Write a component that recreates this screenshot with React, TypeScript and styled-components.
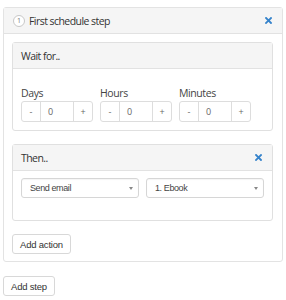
import styled, { createGlobalStyle } from 'styled-components';

const GlobalStyle = createGlobalStyle`
	body {
		margin: 0;
		background: #fff;
		font-family: 'Open Sans', sans-serif;
		color: #333;
	}
`;

const Page = styled.div`
	display: flex;
	flex-direction: column;
	align-items: flex-start;
	padding: 7px 0 0 3px;
	width: 280px;
`;

const Panel = styled.div<{ $outer?: boolean }>`
	align-self: stretch;
	border: 1px solid ${(props) => (props.$outer ? '#e3e3e3' : '#e0e0e0')};
	border-radius: 3px;
	background: #fff;
`;

const PanelHeader = styled.div`
	display: flex;
	align-items: center;
	height: 25px;
	padding: 0 10px 0 8px;
	background: #f5f5f5;
	border-bottom: 1px solid #e2e2e2;
	font-size: 10.5px;
	letter-spacing: -0.55px;
	color: #333;
`;

const Title = styled.span`
	flex: 1;
`;

const Badge = styled.span`
	display: inline-flex;
	align-items: center;
	justify-content: center;
	width: 10px;
	height: 10px;
	margin: 0 4px 0 1px;
	border: 1px solid #c8c8c8;
	border-radius: 50%;
	font-size: 7px;
	letter-spacing: 0;
	color: #777;
	background: #fff;
`;

const OuterBody = styled.div`
	display: flex;
	flex-direction: column;
	align-items: flex-start;
	gap: 13px;
	padding: 8px 9px 7px 8px;
`;

const WaitBody = styled.div`
	display: flex;
	gap: 7px;
	padding: 16px 8px 8px;
`;

const ThenBody = styled.div`
	display: flex;
	gap: 7px;
	padding: 7px 7px 22px 8px;
`;

const Field = styled.div`
	display: flex;
	flex-direction: column;
	width: 72px;
`;

const Label = styled.label`
	font-size: 10.5px;
	letter-spacing: -0.4px;
	line-height: 16px;
	color: #444;
`;

const Stepper = styled.div`
	display: flex;
	height: 21px;
	border: 1px solid #ddd;
	border-radius: 3px;
	box-sizing: border-box;
`;

const StepBtn = styled.span`
	display: flex;
	align-items: center;
	justify-content: center;
	width: 18px;
	font-size: 9px;
	color: #666;
`;

const StepValue = styled.span`
	flex: 1;
	display: flex;
	align-items: center;
	padding-left: 7px;
	border-left: 1px solid #ddd;
	border-right: 1px solid #ddd;
	font-size: 9px;
	color: #666;
`;

const Select = styled.div`
	display: flex;
	align-items: center;
	width: 118px;
	height: 20px;
	box-sizing: border-box;
	padding: 0 5px 0 8px;
	border: 1px solid #d6d6d6;
	border-radius: 3px;
	font-family: 'Liberation Sans', Arial, sans-serif;
	font-size: 9px;
	letter-spacing: -0.4px;
	color: #444;
	box-shadow: inset 0 1px 1px rgba(0, 0, 0, 0.04);
`;

const SelectText = styled.span`
	flex: 1;
`;

const Caret = styled.span`
	width: 0;
	height: 0;
	border-left: 2px solid transparent;
	border-right: 2px solid transparent;
	border-top: 3px solid #888;
`;

const Button = styled.button`
	height: 20px;
	padding: 0 7px;
	border: 1px solid #d8d8d8;
	border-radius: 3px;
	background: #fff;
	font-family: 'Liberation Sans', Arial, sans-serif;
	font-size: 9.5px;
	letter-spacing: -0.2px;
	color: #333;
`;

const StepButton = styled(Button)`
	margin-top: 14px;
`;

function CloseIcon() {
	return (
		<svg width="7" height="7" viewBox="0 0 7 7">
			<path d="M1 1L6 6M6 1L1 6" stroke="#3583cb" strokeWidth="1.8" strokeLinecap="square" />
		</svg>
	);
}

const units = ['Days', 'Hours', 'Minutes'];

function App() {
	return (
		<Page>
			<GlobalStyle />
			<Panel $outer>
				<PanelHeader>
					<Badge>1</Badge>
					<Title>First schedule step</Title>
					<CloseIcon />
				</PanelHeader>
				<OuterBody>
					<Panel>
						<PanelHeader>
							<Title>Wait for..</Title>
						</PanelHeader>
						<WaitBody>
							{units.map((unit) => (
								<Field key={unit}>
									<Label>{unit}</Label>
									<Stepper>
										<StepBtn>-</StepBtn>
										<StepValue>0</StepValue>
										<StepBtn>+</StepBtn>
									</Stepper>
								</Field>
							))}
						</WaitBody>
					</Panel>
					<Panel>
						<PanelHeader>
							<Title>Then..</Title>
							<CloseIcon />
						</PanelHeader>
						<ThenBody>
							<Select>
								<SelectText>Send email</SelectText>
								<Caret />
							</Select>
							<Select>
								<SelectText>1. Ebook</SelectText>
								<Caret />
							</Select>
						</ThenBody>
					</Panel>
					<Button>Add action</Button>
				</OuterBody>
			</Panel>
			<StepButton>Add step</StepButton>
		</Page>
	);
}

export default App;
